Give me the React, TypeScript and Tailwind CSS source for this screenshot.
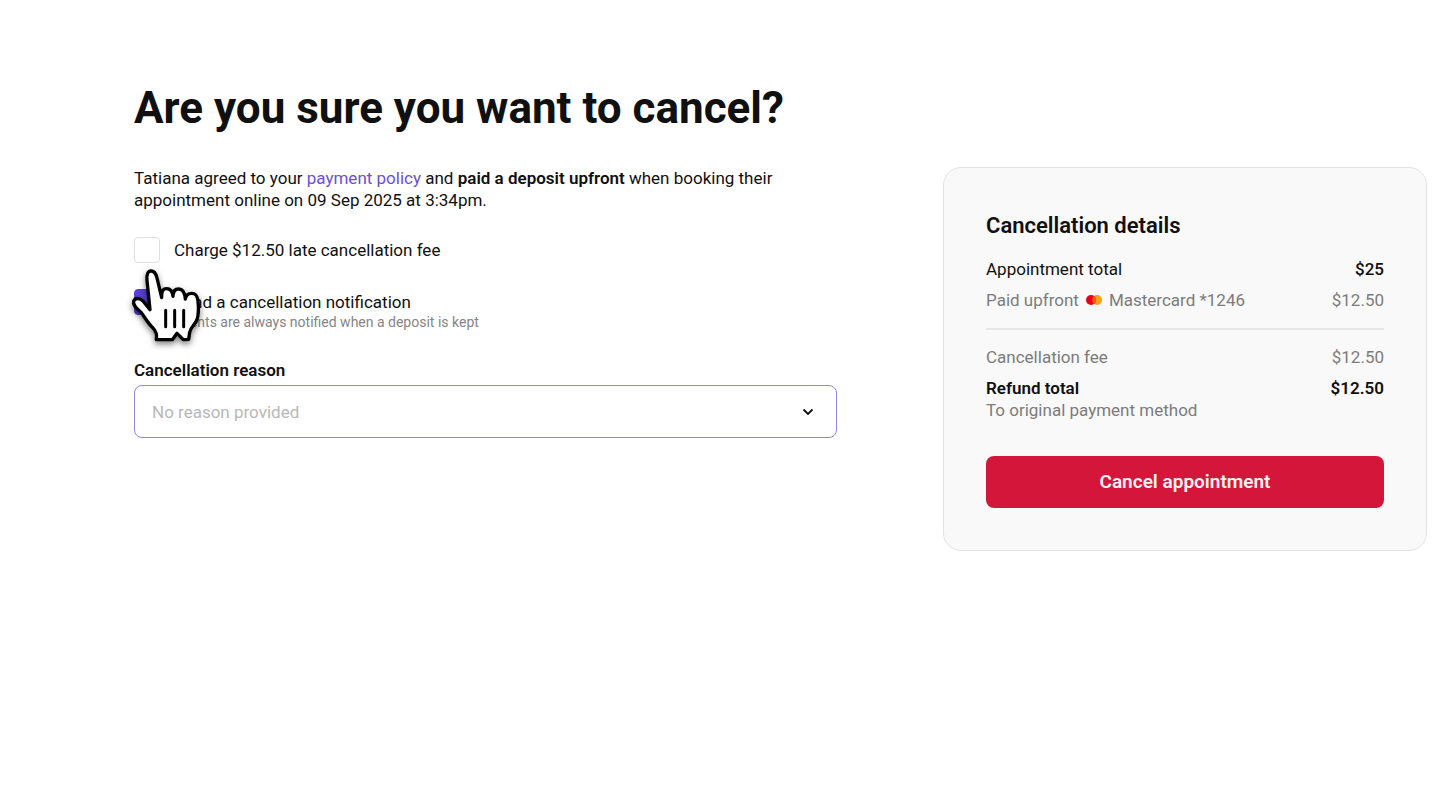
import { useState } from 'react';

function HandPointer() {
  return (
    <svg
      viewBox="30 126 216 228"
      aria-hidden="true"
      className="absolute -left-1 top-[30px] w-[72px] h-[76px] overflow-visible pointer-events-none drop-shadow-[0_3px_3px_rgba(0,0,0,0.5)]"
    >
      <path
        d="M90 254 L81 166 C79 148 84 138 93 138 C103 138 108 146 111 159 L125 218 C124 200 128 191 140 191 C152 191 157 198 159 214 C159 198 165 192 176 192 C188 192 194 200 196 222 C198 210 205 205 215 205 C228 205 232 212 234 228 C236 248 236 268 231 284 C226 298 212 306 209 322 L206 343 L190 344 L171 325 L157 344 L109 344 C112 328 108 318 98 308 C82 292 74 276 63 262 C50 249 38 241 41 229 C45 217 60 219 69 228 Z"
        fill="#fff"
        stroke="#000"
        strokeWidth="10"
        strokeLinejoin="round"
      />
      <path d="M137 256V305M164 256V305M191 256V305" stroke="#000" strokeWidth="9" strokeLinecap="round" />
    </svg>
  );
}

function MastercardMark() {
  return (
    <svg viewBox="0 0 16 10" aria-hidden="true" className="w-4 h-[10px]">
      <circle cx="11" cy="5" r="5" fill="#f79e1b" />
      <circle cx="5" cy="5" r="5" fill="#eb001b" />
      <path d="M8 1a5 5 0 0 1 0 8a5 5 0 0 1 0-8Z" fill="#ff5f00" />
    </svg>
  );
}

const boxStyle =
  'size-[26px] shrink-0 appearance-none rounded-[4px] border border-[#dedede] bg-white checked:border-[#5b3fd6] checked:bg-[#5b3fd6]';

export default function App() {
  const [chargeFee, setChargeFee] = useState(false);
  const [notify, setNotify] = useState(true);
  const [reason, setReason] = useState('');

  return (
    <div className="min-h-screen bg-white pt-20 pl-[134px] pr-[13px] font-['Roboto',sans-serif] text-[17px] leading-[22px] text-[#101010]">
      <h1 className="text-[44px] leading-[56px] font-bold">Are you sure you want to cancel?</h1>

      <div className="mt-[31px] grid grid-cols-[703fr_484fr] items-start gap-[106px]">
        <main className="min-w-0">
          <p>
            Tatiana agreed to your{' '}
            <a href="#policy" className="text-[#6b4fd8]">payment policy</a> and{' '}
            <strong className="font-semibold">paid a deposit upfront</strong> when booking their
            <br />
            appointment online on 09 Sep 2025 at 3:34pm.
          </p>

          <div className="relative mt-[26px] space-y-[26px]">
            <div className="flex items-center gap-[14px]">
              <input
                id="charge-fee"
                type="checkbox"
                className={boxStyle}
                checked={chargeFee}
                onChange={(e) => setChargeFee(e.target.checked)}
              />
              <label htmlFor="charge-fee">Charge $12.50 late cancellation fee</label>
            </div>
            <div className="flex items-start gap-[14px]">
              <input
                id="notify"
                type="checkbox"
                className={boxStyle}
                checked={notify}
                onChange={(e) => setNotify(e.target.checked)}
              />
              <label htmlFor="notify" className="pt-[2px]">
                Send a cancellation notification
                <span className="block text-sm leading-[18px] text-[#858585]">
                  Clients are always notified when a deposit is kept
                </span>
              </label>
            </div>
            <HandPointer />
          </div>

          <label htmlFor="reason" className="mt-7 block font-semibold">
            Cancellation reason
          </label>
          <div className="relative mt-1">
            <select
              id="reason"
              value={reason}
              onChange={(e) => setReason(e.target.value)}
              className="h-[53px] w-full appearance-none rounded-lg border border-[#9385e0] bg-white px-[17px] text-[#b8b8b8]"
            >
              <option value="">No reason provided</option>
            </select>
            <svg
              viewBox="0 0 12 8"
              aria-hidden="true"
              className="absolute right-[23px] top-[23px] w-3 h-2 pointer-events-none"
            >
              <path d="M1.5 1.5 6 6l4.5-4.5" fill="none" stroke="#101010" strokeWidth="1.8" />
            </svg>
          </div>
        </main>

        <aside className="min-w-0 rounded-[18px] border border-[#e3e3e3] bg-[#f9f9f9] p-[42px]">
          <h2 className="text-[22px] leading-8 font-semibold">Cancellation details</h2>
          <dl className="mt-4">
            <div className="flex justify-between">
              <dt>Appointment total</dt>
              <dd className="font-medium">$25</dd>
            </div>
            <div className="mt-[9px] flex justify-between text-[#7c7c7c]">
              <dt className="flex items-center gap-[7px]">
                Paid upfront
                <MastercardMark />
                Mastercard *1246
              </dt>
              <dd>$12.50</dd>
            </div>
            <div className="mt-[17px] flex justify-between border-t-2 border-[#e6e6e6] pt-4 text-[#7c7c7c]">
              <dt>Cancellation fee</dt>
              <dd>$12.50</dd>
            </div>
            <div className="mt-[9px] flex justify-between font-semibold">
              <dt>
                Refund total
                <span className="block font-normal text-[#7c7c7c]">To original payment method</span>
              </dt>
              <dd>$12.50</dd>
            </div>
          </dl>
          <button
            type="button"
            className="mt-[35px] h-[52px] w-full rounded-lg bg-[#d3163a] text-[19px] font-semibold text-[#fff0f2]"
          >
            Cancel appointment
          </button>
        </aside>
      </div>
    </div>
  );
}
